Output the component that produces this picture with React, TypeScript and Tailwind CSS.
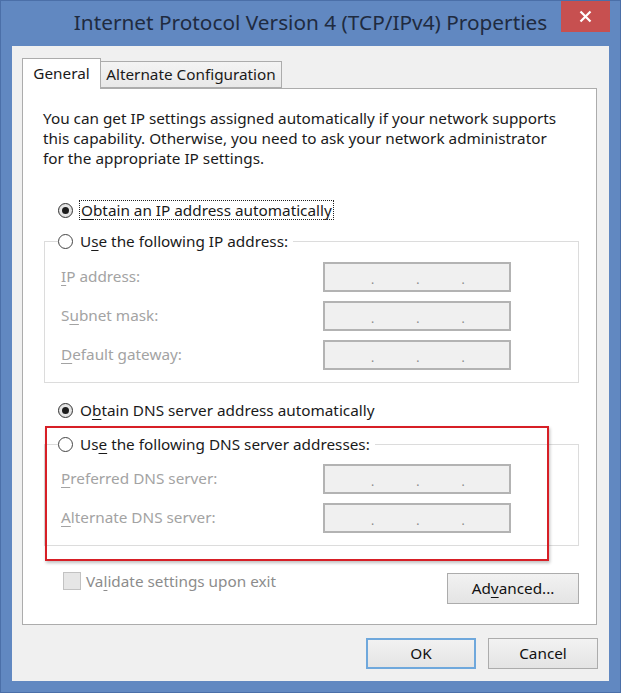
import React from "react";

const U = ({ children }: { children: React.ReactNode }) => (
  <span className="underline decoration-1 underline-offset-[3px]">{children}</span>
);

function Radio({ checked }: { checked?: boolean }) {
  return (
    <span
      className={
        "w-[15px] h-[15px] rounded-full border shrink-0 flex items-center justify-center " +
        (checked
          ? "border-[#333333] bg-[radial-gradient(circle,#f4f4f4_0%,#d8d8d8_100%)]"
          : "border-[#444444] bg-white")
      }
    >
      {checked && <span className="w-[7px] h-[7px] rounded-full bg-[#1c1c1c]" />}
    </span>
  );
}

function IPBox() {
  return (
    <div className="w-[188px] h-[30px] border-2 border-[#b3b3b3] bg-[#f0f0f0] flex items-center pt-[6px] text-[12px] leading-none text-[#8a8a8a]">
      <span className="ml-[46px]">.</span>
      <span className="ml-[42px]">.</span>
      <span className="ml-[42px]">.</span>
    </div>
  );
}

function Row({ label }: { label: React.ReactNode }) {
  return (
    <div className="flex items-center h-[30px]">
      <div className="w-[262px] text-[#a3a3a3] leading-[20px] -mt-[2px]">{label}</div>
      <IPBox />
    </div>
  );
}

function Btn({ children, primary, w = "w-[110px]" }: { children: React.ReactNode; primary?: boolean; w?: string }) {
  return (
    <div
      className={
        w +
        " h-[31px] flex items-center justify-center bg-gradient-to-b from-[#f2f2f2] to-[#e4e4e4] text-[#111] " +
        (primary ? "border-2 border-[#6fa8dc]" : "border border-[#acacac]")
      }
    >
      {children}
    </div>
  );
}

export default function App() {
  return (
    <div
      className="w-[621px] h-[693px] bg-[#6188c1] border border-[#4b6fa8] flex flex-col text-[15.3px] text-[#1a1a1a]"
      style={{ fontFamily: "'Noto Sans', 'Open Sans', sans-serif" }}
    >
      <div className="relative h-[45px] flex items-center justify-center pb-[2px] text-[20.8px] text-[#1f2b40]">
        Internet Protocol Version 4 (TCP/IPv4) Properties
        <div className="absolute right-[10px] top-0 w-[49px] h-[31px] bg-[#c75050] flex items-center justify-center">
          <svg width="13" height="13" viewBox="0 0 13 13">
            <path d="M1.5 1.5 L11.5 11.5 M11.5 1.5 L1.5 11.5" stroke="white" strokeWidth="2.2" />
          </svg>
        </div>
      </div>

      <div className="mx-[11px] h-[635px] bg-[#f0f0f0] flex flex-col pl-[10px] pr-[11px] pt-[12px]">
        {/* tabs */}
        <div className="flex items-end h-[30px] relative z-10">
          <div className="w-[79px] h-[31px] border border-b-0 border-[#acacac] bg-white flex items-center justify-center pb-[2px] -mb-[1px]">
            General
          </div>
          <div className="w-[181px] h-[27px] border border-l-0 border-[#acacac] bg-gradient-to-b from-[#f4f4f4] to-[#e8e8e8] flex items-center justify-center">
            Alternate Configuration
          </div>
        </div>

        {/* panel */}
        <div className="relative w-[575px] h-[537px] border border-[#acacac] bg-white pl-[20px] pt-[19px] flex flex-col">
          <p className="leading-[20px] whitespace-nowrap">
            You can get IP settings assigned automatically if your network supports
            <br />
            this capability. Otherwise, you need to ask your network administrator
            <br />
            for the appropriate IP settings.
          </p>

          <div className="mt-[32px] ml-[15px] h-[20px] flex items-center gap-[6px]">
            <Radio checked />
            <span className="border border-dotted border-[#222] px-[1px] h-[20px] leading-[18px]">
              <U>O</U>btain an IP address automatically
            </span>
          </div>

          <fieldset className="mt-[11px] ml-[1px] w-[535px] border border-[#dcdcdc] pb-[12px]">
            <legend className="ml-[13px] pr-[5px] h-[20px] flex items-center gap-[7px]">
              <Radio />
              <span>
                U<U>s</U>e the following IP address:
              </span>
            </legend>
            <div className="pt-[11px] pl-[16px] flex flex-col gap-[9px]">
              <Row label={<><U>I</U>P address:</>} />
              <Row label={<>S<U>u</U>bnet mask:</>} />
              <Row label={<><U>D</U>efault gateway:</>} />
            </div>
          </fieldset>

          <div className="mt-[17px] ml-[15px] h-[20px] flex items-center gap-[7px]">
            <Radio checked />
            <span>
              O<U>b</U>tain DNS server address automatically
            </span>
          </div>

          <fieldset className="mt-[14px] ml-[1px] w-[535px] border border-[#dcdcdc] pb-[12px]">
            <legend className="ml-[13px] pr-[5px] h-[20px] flex items-center gap-[7px]">
              <Radio />
              <span>
                Us<U>e</U> the following DNS server addresses:
              </span>
            </legend>
            <div className="pt-[10px] pl-[16px] flex flex-col gap-[9px]">
              <Row label={<><U>P</U>referred DNS server:</>} />
              <Row label={<><U>A</U>lternate DNS server:</>} />
            </div>
          </fieldset>

          <div className="mt-[25px] ml-[1px] w-[535px] flex items-start justify-between">
            <div className="ml-[19px] h-[20px] flex items-center gap-[5px] text-[#8c8c8c]">
              <span className="w-[18px] h-[18px] border border-[#c2c2c2] bg-[#e6e6e6]" />
              <span>
                Va<U>l</U>idate settings upon exit
              </span>
            </div>
            <div className="mt-[2px]">
              <Btn w="w-[132px]">
                Ad<U>v</U>anced...
              </Btn>
            </div>
          </div>

          {/* annotation */}
          <div className="absolute left-[22px] top-[337px] w-[504px] h-[135px] border-2 border-[#d71f26] shadow-[1px_2px_3px_rgba(0,0,0,0.25)]" />
        </div>

        <div className="mt-[13px] flex justify-end gap-[12px]">
          <Btn primary>OK</Btn>
          <Btn>Cancel</Btn>
        </div>
      </div>
    </div>
  );
}
